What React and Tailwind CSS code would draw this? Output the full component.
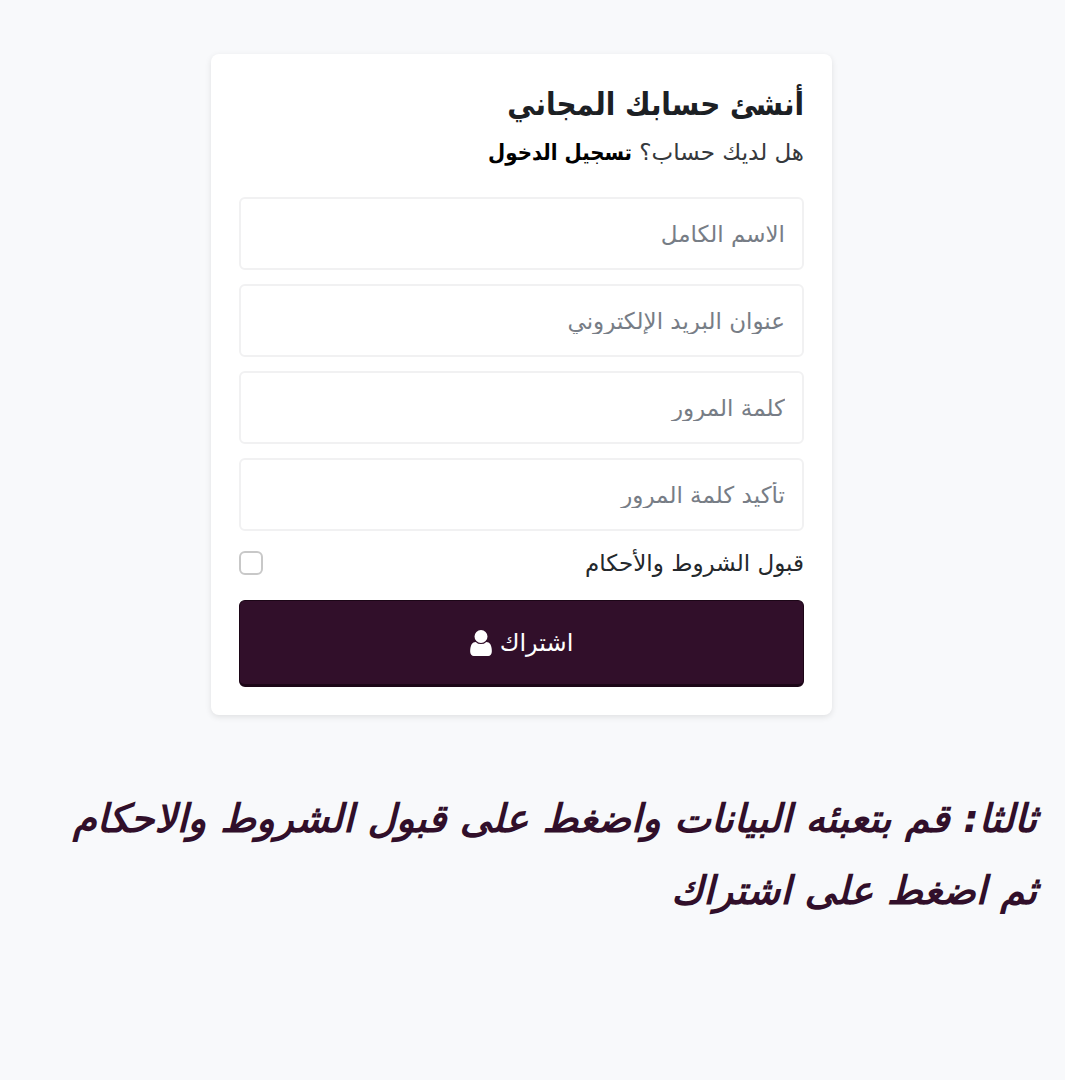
import React from "react";

const fields = [
  { id: "name", type: "text", label: "الاسم الكامل" },
  { id: "email", type: "email", label: "عنوان البريد الإلكتروني" },
  { id: "password", type: "password", label: "كلمة المرور" },
  { id: "confirm", type: "password", label: "تأكيد كلمة المرور" },
];

function UserIcon() {
  return (
    <svg viewBox="0 128 1280 1536" fill="currentColor" aria-hidden="true" className="h-[26px] w-[22px]">
      <path d="M1280 1399q0 109-62.5 187t-150.5 78h-854q-88 0-150.5-78t-62.5-187q0-85 8.5-160.5t31.5-152 58.5-131 94-89 134.5-34.5q131 128 313 128t313-128q76 0 134.5 34.5t94 89 58.5 131 31.5 152 8.5 160.5zm-256-887q0 159-112.5 271.5t-271.5 112.5-271.5-112.5-112.5-271.5 112.5-271.5 271.5-112.5 271.5 112.5 112.5 271.5z" />
    </svg>
  );
}

function Field({ f }) {
  return (
    <input
      id={f.id}
      name={f.id}
      type={f.type}
      aria-label={f.label}
      placeholder={f.label}
      className="block h-[73px] w-full rounded-md border-2 border-[#f1f1f2] bg-white px-[17px] text-right text-[23px] text-[#212529] outline-none placeholder:text-[#777d86]"
    />
  );
}

function SignupCard() {
  return (
    <form className="w-full max-w-[621px] rounded-lg bg-white p-7 shadow-[0_2px_6px_rgba(0,0,0,0.1)]">
      <h1 className="font-['DejaVu_Sans_Condensed','DejaVu_Sans',sans-serif] text-[31px] leading-[44px] font-bold text-[#1c2024]">
        أنشئ حسابك المجاني
      </h1>
      <p className="mt-2 text-[23px] leading-[36px] text-[#35393d]">
        هل لديك حساب؟{" "}
        <a
          href="#login"
          className="font-['DejaVu_Sans_Condensed','DejaVu_Sans',sans-serif] text-[22px] font-bold text-black"
        >
          تسجيل الدخول
        </a>
      </p>
      <div className="mt-[26px] flex flex-col gap-[14px]">
        {fields.map((f) => (
          <Field key={f.id} f={f} />
        ))}
      </div>
      <div className="mt-3 flex items-center justify-between">
        <label htmlFor="terms" className="text-[23px] leading-[40px] text-[#24282c]">
          قبول الشروط والأحكام
        </label>
        <input
          id="terms"
          type="checkbox"
          className="size-6 appearance-none rounded-md border-2 border-[#c8c8c8] bg-white checked:bg-[#310f2a]"
        />
      </div>
      <button
        type="submit"
        className="mt-[17px] flex h-[87px] w-full items-center justify-center gap-2 rounded-md border border-b-3 border-[#1c0617] bg-[#310f2a] text-2xl text-white"
      >
        اشتراك
        <UserIcon />
      </button>
    </form>
  );
}

export default function App() {
  return (
    <div className="bg-white pr-[15px]">
      <main
        dir="rtl"
        className="flex min-h-screen flex-col items-center bg-[#f8f9fb] px-7 pt-[54px] font-['DejaVu_Sans',sans-serif]"
      >
        <div className="flex w-full justify-center pr-[22px]">
          <SignupCard />
        </div>
        <p className="mt-[68px] w-full text-[39px] leading-[72px] font-bold text-[#310f2a] italic">
          ثالثا: قم بتعبئه البيانات واضغط على قبول الشروط والاحكام ثم اضغط على اشتراك
        </p>
      </main>
    </div>
  );
}
